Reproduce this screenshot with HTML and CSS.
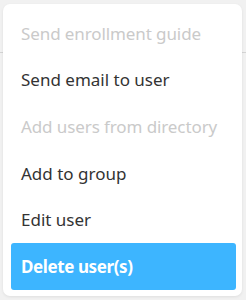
FILE: index.html
```html
<!DOCTYPE html>
<html lang="en">

<head>
    <meta charset="utf-8">
    <meta name="viewport" content="width=device-width, initial-scale=1.0">
    <title>User actions</title>

    <link rel="stylesheet" href="styles.css">
</head>

<body>
    <div class="bagside">
        <div class="streg"></div>
    </div>

    <ul class="menu">
        <li class="punkt slukket">Send enrollment guide</li>
        <li class="punkt">Send email to user</li>
        <li class="punkt slukket">Add users from directory</li>
        <li class="punkt">Add to group</li>
        <li class="punkt">Edit user</li>
        <li class="punkt valgt">Delete user(s)</li>
    </ul>
</body></html>
```

FILE: styles.css
```css
        html,
        body {
            margin: 0;
            height: 100%;
        }

        body {
            background: #ededed;
            font-family: "Noto Sans", Roboto, sans-serif;
            position: relative;
            overflow: hidden;
        }

        .bagside {
            height: 100%;
            background: #f1f1f1;
        }

        .streg {
            height: 52px;
            border-bottom: 1px solid #d4d4d4;
        }

        .menu {
            position: absolute;
            top: 4px;
            left: 3px;
            width: 239px;
            height: 292px;
            box-sizing: border-box;
            margin: 0;
            padding: 6px 6px 6px 8px;
            list-style: none;
            background: #fff;
            border-radius: 7px;
            box-shadow: 0 1px 3px rgba(0, 0, 0, 0.08);
        }

        .punkt {
            height: 46.67px;
            display: flex;
            align-items: center;
            padding-left: 10px;
            font-size: 17px;
            color: #333;
            white-space: nowrap;
        }

        .slukket {
            color: #cacaca;
            letter-spacing: -0.1px;
        }

        .valgt {
            background: #3db5ff;
            color: #fff;
            font-weight: bold;
            letter-spacing: -0.4px;
            border-radius: 3px;
        }
```
